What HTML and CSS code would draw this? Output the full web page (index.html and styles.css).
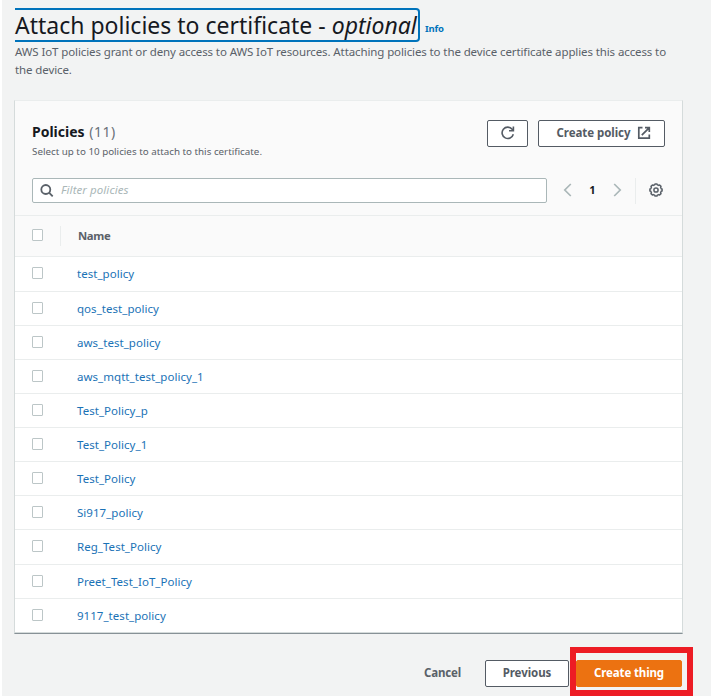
FILE: index.html
```
<!DOCTYPE html>
<html lang="en">
<head>
<meta charset="utf-8">
<title>Attach policies to certificate</title>
<link rel="stylesheet" href="styles.css">
</head>
<body>
<main class="page">
  <header class="intro">
    <div class="title-row">
      <h1 class="title">Attach policies to certificate - <em>optional</em></h1>
      <a class="info">Info</a>
    </div>
    <p class="description">AWS IoT policies grant or deny access to AWS IoT resources. Attaching policies to the device certificate applies this access to<br>the device.</p>
  </header>

  <section class="panel">
    <div class="panel-head">
      <div class="head-row">
        <div class="heading">
          <h2 class="panel-title">Policies <span class="count">(11)</span></h2>
          <p class="hint">Select up to 10 policies to attach to this certificate.</p>
        </div>
        <button class="btn refresh" aria-label="Refresh">
          <svg width="16" height="16" viewBox="0 0 16 16" fill="none" stroke="currentColor" stroke-width="1.6"><path d="M13.3 9.3A5.7 5.7 0 1 1 12.2 4.2L13.2 5.4"/><path d="M13.4 1.4V5.8H9"/></svg>
        </button>
        <button class="btn create"><span>Create policy</span>
          <svg width="14" height="14" viewBox="0 0 14 14" fill="none" stroke="currentColor" stroke-width="1.7"><path d="M5.5 1.6H1.8V12.2H12.3V8.5M8 1.6H12.3V6M12.1 1.8L4.8 9.1"/></svg>
        </button>
      </div>
      <div class="filter-row">
        <div class="search">
          <svg width="14" height="14" viewBox="0 0 14 14" fill="none" stroke="currentColor" stroke-width="1.8"><circle cx="5.8" cy="5.5" r="4.5"/><path d="M9 8.7L12.7 12.4"/></svg>
          <span class="placeholder">Filter policies</span>
        </div>
        <div class="pager">
          <svg class="arrow" width="9" height="14" viewBox="0 0 9 14" fill="none" stroke="currentColor" stroke-width="1.7"><path d="M7.8 1L1.8 7L7.8 13"/></svg>
          <span class="page-number">1</span>
          <svg class="arrow" width="9" height="14" viewBox="0 0 9 14" fill="none" stroke="currentColor" stroke-width="1.7"><path d="M1.2 1L7.2 7L1.2 13"/></svg>
        </div>
        <div class="settings">
          <svg width="14" height="14" viewBox="0 0 14 14" fill="none" stroke="currentColor"><path stroke-width="1.5" stroke-linejoin="round" d="M5.7 1.8L6 .9H8L8.3 1.8L9.7 2.4L10.6 2L12 3.4L11.6 4.3L12.2 5.7L13.1 6V8L12.2 8.3L11.6 9.7L12 10.6L10.6 12L9.7 11.6L8.3 12.2L8 13.1H6L5.7 12.2L4.3 11.6L3.4 12L2 10.6L2.4 9.7L1.8 8.3L.9 8V6L1.8 5.7L2.4 4.3L2 3.4L3.4 2L4.3 2.4Z"/><circle cx="7" cy="7" r="2.1" stroke-width="1.5"/></svg>
        </div>
      </div>
    </div>
    <div class="columns">
      <span class="check"></span>
      <span class="column-name">Name</span>
    </div>
    <ul class="rows">
      <li><span class="check"></span><a>test_policy</a></li>
      <li><span class="check"></span><a>qos_test_policy</a></li>
      <li><span class="check"></span><a>aws_test_policy</a></li>
      <li><span class="check"></span><a>aws_mqtt_test_policy_1</a></li>
      <li><span class="check"></span><a>Test_Policy_p</a></li>
      <li><span class="check"></span><a>Test_Policy_1</a></li>
      <li><span class="check"></span><a>Test_Policy</a></li>
      <li><span class="check"></span><a>Si917_policy</a></li>
      <li><span class="check"></span><a>Reg_Test_Policy</a></li>
      <li><span class="check"></span><a>Preet_Test_IoT_Policy</a></li>
      <li><span class="check"></span><a>9117_test_policy</a></li>
    </ul>
  </section>

  <footer class="actions">
    <a class="cancel">Cancel</a>
    <button class="btn previous">Previous</button>
    <div class="highlight"><button class="btn primary">Create thing</button></div>
  </footer>
</main>
</body>
</html>
```
FILE: styles.css
```
* { box-sizing: border-box; }
body {
  margin: 0;
  background: #fff;
  color: #5a6169;
  font: 11.5px/18px "Noto Sans", "Open Sans", sans-serif;
}
h1, h2, p, ul { margin: 0; padding: 0; }
svg { display: block; flex: none; }
.page {
  width: 709px;
  height: 696px;
  margin-left: 2px;
  padding: 8px 0 0 12px;
  background: #f2f3f3;
  overflow: hidden;
}
.intro { height: 92px; padding-left: 1px; }
.title-row { display: flex; height: 34px; }
.title {
  width: 405px;
  height: 34px;
  border: 2px solid #0073bb;
  border-left: 0;
  border-radius: 0 4px 4px 0;
  color: #16191f;
  font-size: 23px;
  font-weight: 400;
  line-height: 30px;
  white-space: nowrap;
}
.info {
  margin: 12px 0 0 5px;
  color: #0073bb;
  font-size: 9.5px;
  font-weight: 700;
  letter-spacing: -0.2px;
}
.description { padding-top: 1px; letter-spacing: -0.11px; white-space: nowrap; }

.panel {
  width: 669px;
  height: 534px;
  border: 1px solid #d5dbdb;
  border-top-color: #eaeded;
  border-bottom-color: #879196;
  background: #fff;
}
.panel-head {
  height: 115px;
  padding: 19px 17px 0;
  border-bottom: 1px solid #eaeded;
  background: #fafafa;
}
.head-row { display: flex; height: 58px; }
.heading { flex: 1; }
.panel-title {
  height: 22px;
  color: #16191f;
  font-size: 14px;
  line-height: 23px;
}
.count { margin-left: 1px; color: #687078; font-weight: 400; letter-spacing: 0.5px; }
.hint { font-size: 9.8px; line-height: 19px; }
.btn {
  display: flex;
  align-items: center;
  justify-content: center;
  height: 27px;
  padding: 0 0 1px;
  border: 1px solid #545b64;
  border-radius: 2px;
  background: #fff;
  color: #545b64;
  font: 700 11.5px/18px "Noto Sans", "Open Sans", sans-serif;
  letter-spacing: -0.06px;
}
.refresh { width: 41px; margin-right: 10px; }
.create { width: 127px; gap: 7px; padding-left: 5px; }
.filter-row { display: flex; align-items: center; height: 25px; }
.search {
  display: flex;
  align-items: center;
  width: 515px;
  height: 25px;
  padding-left: 7px;
  border: 1px solid #aab7b8;
  border-radius: 2px;
  background: #fff;
}
.placeholder { margin-left: 7px; padding-bottom: 1px; color: #aab7b8; font-style: italic; letter-spacing: 0.07px; }
.pager {
  display: flex;
  align-items: center;
  justify-content: space-between;
  width: 59px;
  margin-left: 16px;
  padding-bottom: 2px;
}
.arrow { color: #aab7b8; }
.page-number { color: #16191f; font-size: 11px; font-weight: 700; }
.settings {
  display: flex;
  align-items: center;
  height: 26px;
  margin-left: 13px;
  padding: 0 0 2px 13px;
  border-left: 1px solid #eaeded;
}
.columns {
  display: flex;
  align-items: center;
  height: 41px;
  padding-left: 17px;
  border-bottom: 1px solid #eaeded;
  background: #fafafa;
}
.check {
  flex: none;
  width: 11px;
  height: 12px;
  margin-bottom: 2px;
  border: 1px solid #bcc6c7;
  border-radius: 1px;
  background: #fff;
}
.column-name {
  margin-left: 17px;
  padding-left: 17px;
  border-left: 1px solid #eaeded;
  line-height: 20px;
  font-size: 11.3px;
  font-weight: 700;
  letter-spacing: -0.35px;
}
.rows { list-style: none; }
.rows li {
  display: flex;
  align-items: center;
  height: 34px;
  padding-left: 17px;
  border-bottom: 1px solid #eaeded;
}
.rows li:first-child, .rows li:nth-child(9) { height: 35px; }
.rows li:last-child { border-bottom-color: #d5dbdb; }
.rows a { margin-left: 34px; color: #1a72b6; letter-spacing: 0.04px; }

.actions { display: flex; height: 62px; padding: 26px 0 0 410px; }
.cancel { width: 61px; padding-top: 4px; font-weight: 700; letter-spacing: -0.15px; }
.actions .btn { flex: none; }
.previous { width: 84px; }
.highlight {
  flex: none;
  width: 123px;
  height: 49px;
  margin: -13px 0 0 1px;
  padding: 7px 0 0;
  border: 6px solid #ed1c24;
}
.primary { width: 106px; border-color: #ec7211; background: #ec7211; color: #fff; letter-spacing: -0.13px; }
```
